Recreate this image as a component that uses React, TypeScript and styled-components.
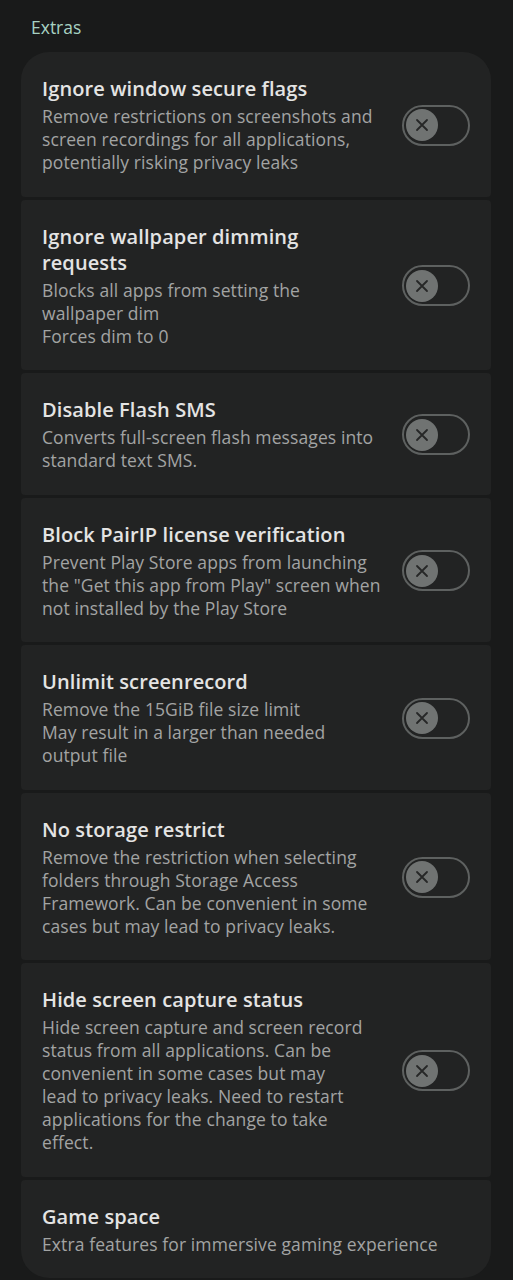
import React from 'react'
import styled, { createGlobalStyle } from 'styled-components'

const colors = {
  page: '#191a1a',
  card: '#222323',
  title: '#e4e4e3',
  summary: '#a2a4a3',
  accent: '#a7d2c3',
  track: '#5e6160',
  thumb: '#707372',
  cross: '#262727'
}

const GlobalStyle = createGlobalStyle`
  html, body {
    margin: 0;
    padding: 0;
    background: ${colors.page};
  }
  body {
    font-family: 'Open Sans', Roboto, sans-serif;
    -webkit-font-smoothing: antialiased;
  }
`

const Screen = styled.div`
  width: 513px;
  min-height: 1280px;
  box-sizing: border-box;
  padding: 0 22px 0 21px;
  background: ${colors.page};
`

const Category = styled.h2`
  margin: 0;
  padding: 15px 0 13px 10px;
  font-size: 17.5px;
  line-height: 24px;
  font-weight: 400;
  color: ${colors.accent};
`

const List = styled.div`
  display: flex;
  flex-direction: column;
  gap: 3px;
`

const Item = styled.div<{ $first?: boolean; $last?: boolean }>`
  display: flex;
  align-items: center;
  padding: 24px 21px 22.5px 21px;
  background: ${colors.card};
  border-radius: ${p => (p.$first ? '28px 28px' : '4px 4px')} ${p => (p.$last ? '28px 28px' : '4px 4px')};
`

const Text = styled.div`
  flex: 1;
  min-width: 0;
`

const Title = styled.div`
  font-size: 20px;
  line-height: 26px;
  font-weight: 600;
  letter-spacing: 0.1px;
  color: ${colors.title};
  margin-bottom: 3px;
  white-space: nowrap;
`

const Summary = styled.div`
  font-size: 17.5px;
  line-height: 23px;
  letter-spacing: 0.1px;
  color: ${colors.summary};
  white-space: nowrap;
`

const Switch = styled.div`
  flex: none;
  display: flex;
  align-items: center;
  width: 68px;
  height: 41px;
  box-sizing: border-box;
  padding-left: 2px;
  border: 2.5px solid ${colors.track};
  border-radius: 21px;
  margin-left: 16px;
`

const Thumb = styled.div`
  display: flex;
  align-items: center;
  justify-content: center;
  width: 32px;
  height: 32px;
  border-radius: 50%;
  background: ${colors.thumb};
`

type Pref = {
  title: string[]
  summary: string[]
  toggle?: boolean
}

const prefs: Pref[] = [
  {
    title: ['Ignore window secure flags'],
    summary: [
      'Remove restrictions on screenshots and',
      'screen recordings for all applications,',
      'potentially risking privacy leaks'
    ],
    toggle: true
  },
  {
    title: ['Ignore wallpaper dimming', 'requests'],
    summary: ['Blocks all apps from setting the', 'wallpaper dim', 'Forces dim to 0'],
    toggle: true
  },
  {
    title: ['Disable Flash SMS'],
    summary: ['Converts full-screen flash messages into', 'standard text SMS.'],
    toggle: true
  },
  {
    title: ['Block PairIP license verification'],
    summary: [
      'Prevent Play Store apps from launching',
      'the "Get this app from Play" screen when',
      'not installed by the Play Store'
    ],
    toggle: true
  },
  {
    title: ['Unlimit screenrecord'],
    summary: ['Remove the 15GiB file size limit', 'May result in a larger than needed', 'output file'],
    toggle: true
  },
  {
    title: ['No storage restrict'],
    summary: [
      'Remove the restriction when selecting',
      'folders through Storage Access',
      'Framework. Can be convenient in some',
      'cases but may lead to privacy leaks.'
    ],
    toggle: true
  },
  {
    title: ['Hide screen capture status'],
    summary: [
      'Hide screen capture and screen record',
      'status from all applications. Can be',
      'convenient in some cases but may',
      'lead to privacy leaks. Need to restart',
      'applications for the change to take',
      'effect.'
    ],
    toggle: true
  },
  {
    title: ['Game space'],
    summary: ['Extra features for immersive gaming experience']
  }
]

function Cross () {
  return (
    <svg width='14' height='14' viewBox='0 0 14 14'>
      <path d='M2 2L12 12M12 2L2 12' stroke={colors.cross} strokeWidth='1.8' strokeLinecap='round' />
    </svg>
  )
}

function Lines ({ lines }: { lines: string[] }) {
  return (
    <>
      {lines.map((l, i) => (
        <React.Fragment key={i}>
          {i > 0 && <br />}
          {l}
        </React.Fragment>
      ))}
    </>
  )
}

export default function App () {
  return (
    <Screen>
      <GlobalStyle />
      <Category>Extras</Category>
      <List>
        {prefs.map((p, i) => (
          <Item key={i} $first={i === 0} $last={i === prefs.length - 1}>
            <Text>
              <Title><Lines lines={p.title} /></Title>
              <Summary><Lines lines={p.summary} /></Summary>
            </Text>
            {p.toggle && (
              <Switch>
                <Thumb><Cross /></Thumb>
              </Switch>
            )}
          </Item>
        ))}
      </List>
    </Screen>
  )
}
